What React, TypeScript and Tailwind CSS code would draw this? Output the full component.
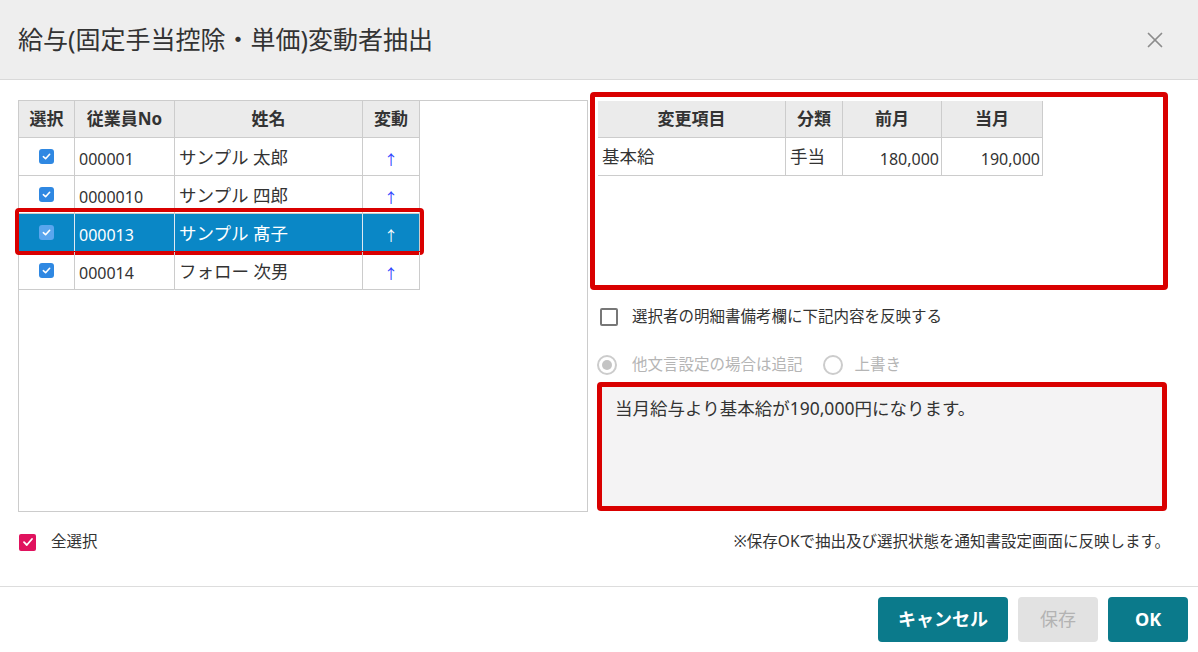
import { X } from 'lucide-react'

type Emp = { no: string; name: string; selected?: boolean }

const employees: Emp[] = [
  { no: '000001', name: 'サンプル 太郎' },
  { no: '0000010', name: 'サンプル 四郎' },
  { no: '000013', name: 'サンプル 髙子', selected: true },
  { no: '000014', name: 'フォロー 次男' },
]

function Check ({ light }: { light?: boolean }): JSX.Element {
  return (
    <span className={`flex h-[15px] w-[15px] items-center justify-center rounded-[3px] ${light ? 'bg-[#5aa6ee]' : 'bg-[#2f88e2]'}`}>
      <svg width="9" height="9" viewBox="0 0 10 10" fill="none">
        <path d="M1.5 5.2 4 7.5 8.5 2.5" stroke="white" strokeWidth="1.8" strokeLinecap="round" strokeLinejoin="round" />
      </svg>
    </span>
  )
}

function EmployeeTable (): JSX.Element {
  const cols = 'grid grid-cols-[56px_100px_188px_57px] w-[401px]'
  return (
    <div className="w-[401px] text-[#333]">
      <div className={`${cols} h-[37px] border-b border-[#cccccc] bg-[#ebebeb] text-[17px] font-bold`}>
        <div className="flex items-center justify-center border-r border-[#cccccc]">選択</div>
        <div className="flex items-center justify-center border-r border-[#cccccc]">従業員No</div>
        <div className="flex items-center justify-center border-r border-[#cccccc]">姓名</div>
        <div className="flex items-center justify-center border-r border-[#cccccc]">変動</div>
      </div>
      {employees.map((e) => (
        <div key={e.no} className="relative">
          <div className={`${cols} h-[38px] border-b text-[16px] ${e.selected ? 'border-[#0a87c6] bg-[#0a87c6] text-white' : 'border-[#cccccc]'}`}>
            <div className={`flex items-center justify-center border-r ${e.selected ? 'border-[#dfe9f2]' : 'border-[#cccccc]'}`}>
              <Check light={e.selected} />
            </div>
            <div className={`flex items-center pl-[4px] pt-[4px] border-r ${e.selected ? 'border-[#dfe9f2]' : 'border-[#cccccc]'}`}>{e.no}</div>
            <div className={`flex items-center pl-[4px] pt-[1px] text-[17.5px] border-r ${e.selected ? 'border-[#dfe9f2]' : 'border-[#cccccc]'}`}>{e.name}</div>
            <div className={`flex items-center justify-center pt-[5px] border-r border-[#cccccc] text-[14px] ${e.selected ? 'text-white' : 'text-[#2a40ff]'}`}>↑</div>
          </div>
          {e.selected && (
            <div className="pointer-events-none absolute -inset-x-[4px] -top-[6px] -bottom-[3px] rounded-[4px] border-[4px] border-[#d90000]" />
          )}
        </div>
      ))}
    </div>
  )
}

function ChangeTable (): JSX.Element {
  const cols = 'grid grid-cols-[188px_57px_99px_101px] w-[445px]'
  return (
    <div className="w-[445px] text-[#333]">
      <div className={`${cols} h-[37px] border-b border-[#cccccc] bg-[#ebebeb] text-[17px] font-bold`}>
        <div className="flex items-center justify-center border-r border-[#cccccc]">変更項目</div>
        <div className="flex items-center justify-center border-r border-[#cccccc]">分類</div>
        <div className="flex items-center justify-center border-r border-[#cccccc]">前月</div>
        <div className="flex items-center justify-center border-r border-[#cccccc]">当月</div>
      </div>
      <div className={`${cols} h-[38px] border-b border-[#cccccc] text-[16px]`}>
        <div className="flex items-center pl-[4px] text-[17.5px] border-r border-[#cccccc]">基本給</div>
        <div className="flex items-center pl-[4px] text-[17.5px] border-r border-[#cccccc]">手当</div>
        <div className="flex items-center justify-end pr-[2px] pt-[4px] border-r border-[#cccccc]">180,000</div>
        <div className="flex items-center justify-end pr-[2px] pt-[4px] border-r border-[#cccccc]">190,000</div>
      </div>
    </div>
  )
}

export default function App (): JSX.Element {
  return (
    <div className="h-[652px] w-[1198px] overflow-hidden bg-white font-['Noto_Sans','Noto_Sans_CJK_JP',sans-serif] text-[#333]">
      <div className="flex h-[80px] items-center justify-between border-b border-[#d9d9d9] bg-[#eeeeee] pl-[18px] pr-[30px]">
        <h1 className="text-[25px] font-normal text-[#333]">給与(固定手当控除・単価)変動者抽出</h1>
        <X size={26} strokeWidth={1.6} className="text-[#8c8c8c]" />
      </div>

      <div className="flex h-[506px] flex-col">
        <div className="flex items-start pl-[18px] pt-[12px]">
          <div className="mt-[8px] h-[412px] w-[570px] border border-[#cccccc]">
            <EmployeeTable />
          </div>

          <div className="ml-[2px] flex w-[578px] flex-col">
            <div className="h-[198px] rounded-[4px] border-[5px] border-[#d90000] pl-[3px] pt-[4px]">
              <ChangeTable />
            </div>

            <label className="mt-[18px] flex h-[18px] items-center pl-[10px] text-[15.5px] text-[#333]">
              <span className="h-[18px] w-[18px] rounded-[2px] border-2 border-[#777]" />
              <span className="ml-[14px]">選択者の明細書備考欄に下記内容を反映する</span>
            </label>

            <div className="mt-[29px] flex h-[20px] items-center pl-[7px] text-[15.5px] text-[#b5b5b5]">
              <span className="flex h-[20px] w-[20px] items-center justify-center rounded-full border-2 border-[#cccccc]">
                <span className="h-[10px] w-[10px] rounded-full bg-[#c4c4c4]" />
              </span>
              <span className="ml-[15px]">他文言設定の場合は追記</span>
              <span className="ml-[20px] h-[20px] w-[20px] rounded-full border-2 border-[#cccccc]" />
              <span className="ml-[12px]">上書き</span>
            </div>

            <div className="ml-[7px] mt-[7px] h-[129px] w-[570px] rounded-[4px] border-[5px] border-[#d90000] bg-[#f4f3f4] pl-[13px] pt-[8px] text-[17.5px] text-[#333]">
              当月給与より基本給が190,000円になります。
            </div>
          </div>
        </div>

        <div className="mt-[21px] flex h-[18px] items-center justify-between pl-[19px] pr-[28px]">
          <label className="flex items-center text-[15.5px] text-[#333]">
            <span className="flex h-[17px] w-[17px] items-center justify-center rounded-[2px] bg-[#e0125e]">
              <svg width="12" height="12" viewBox="0 0 12 12" fill="none">
                <path d="M2 6.2 4.8 9 10 3" stroke="white" strokeWidth="1.8" strokeLinecap="round" strokeLinejoin="round" />
              </svg>
            </span>
            <span className="ml-[15px]">全選択</span>
          </label>
          <p className="text-[15.5px] text-[#333]">※保存OKで抽出及び選択状態を通知書設定画面に反映します。</p>
        </div>
      </div>

      <div className="flex h-[66px] justify-end gap-[10px] border-t border-[#dddddd] pr-[10px] pt-[10px]">
        <button className="h-[45px] w-[130px] rounded-[4px] bg-[#0b7a8b] text-[18px] font-bold text-white">キャンセル</button>
        <button className="h-[45px] w-[80px] rounded-[4px] bg-[#e2e2e2] text-[18px] text-[#b3b3b3]">保存</button>
        <button className="h-[45px] w-[80px] rounded-[4px] bg-[#0b7a8b] text-[18px] font-bold text-white">OK</button>
      </div>
    </div>
  )
}
